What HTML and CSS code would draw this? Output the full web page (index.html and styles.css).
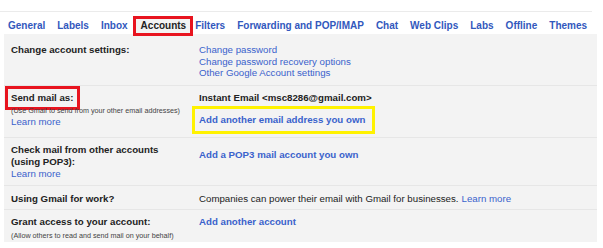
FILE: index.html
```html
<!DOCTYPE html>
<html lang="en">

<head>
  <meta charset="UTF-8" />
  <title>Settings - Accounts</title>
  <link rel="stylesheet" href="styles.css">
</head>

<body>
  <div class="tabs">
    <a class="tab">General</a>
    <a class="tab">Labels</a>
    <a class="tab">Inbox</a>
    <a class="tab active">Accounts</a>
    <a class="tab">Filters</a>
    <a class="tab">Forwarding and POP/IMAP</a>
    <a class="tab">Chat</a>
    <a class="tab">Web Clips</a>
    <a class="tab">Labs</a>
    <a class="tab">Offline</a>
    <a class="tab">Themes</a>
  </div>

  <div class="panel">
    <div class="row first">
      <div class="label">Change account settings:</div>
      <div class="value">
        <a class="link">Change password</a>
        <a class="link">Change password recovery options</a>
        <a class="link">Other Google Account settings</a>
      </div>
    </div>

    <div class="row send">
      <div class="label">
        <span class="marked">Send mail as:</span>
        <div class="note">(Use Gmail to send from your other email addresses)</div>
        <a class="link">Learn more</a>
      </div>
      <div class="value">
        <div class="strong">Instant Email &lt;msc8286@gmail.com&gt;</div>
        <div class="highlight"><a class="link strong">Add another email address you own</a></div>
      </div>
    </div>

    <div class="row pop">
      <div class="label">
        <div class="strong">Check mail from other accounts</div>
        <div class="strong">(using POP3):</div>
        <a class="link">Learn more</a>
      </div>
      <div class="value">
        <a class="link strong">Add a POP3 mail account you own</a>
      </div>
    </div>

    <div class="row work">
      <div class="label">Using Gmail for work?</div>
      <div class="value">
        <span class="plain">Companies can power their email with Gmail for businesses.</span>
        <a class="link">Learn more</a>
      </div>
    </div>

    <div class="row last">
      <div class="label">
        <div class="strong">Grant access to your account:</div>
        <div class="note">(Allow others to read and send mail on your behalf)</div>
      </div>
      <div class="value">
        <a class="link strong">Add another account</a>
      </div>
    </div>
  </div>
</body>

</html>
```

FILE: styles.css
```css
body {
  margin: 0;
  background: #fff;
  font-family: "Liberation Sans", Arial, sans-serif;
  color: #222;
}

.tabs {
  display: flex;
  align-items: flex-end;
  height: 23px;
  margin-top: 11px;
  width: 592px;
  border-top: 1px solid #ebebeb;
  padding-left: 2px;
  box-sizing: border-box;
  white-space: nowrap;
}

.tab {
  display: block;
  flex-shrink: 0;
  padding: 0 6px;
  margin-bottom: 1px;
  line-height: 14px;
  font-size: 10px;
  font-weight: bold;
  color: #3258bd;
}

.tab.active {
  position: relative;
  z-index: 1;
  color: #222;
  background: #f3f3f3;
  border: 3px solid #e8141f;
  padding: 0 4px 0 5px;
  margin: 0 -4px -2px -1px;
}

.panel {
  margin: 0 6px 0 4px;
  background: #f3f3f3;
  padding-top: 4px;
  padding-bottom: 1px;
}

.row {
  display: grid;
  grid-template-columns: 188px 1fr;
  padding: 7px 7px 5px;
  border-top: 1px solid #e6e6e6;
  font-size: 9.7px;
  line-height: 11.5px;
}

.row.first {
  border-top: none;
  padding: 6px 7px 6px;
}

.row.send {
  padding: 6px 7px 3px;
}

.row.pop {
  padding: 6px 7px 5px;
  line-height: 12px;
}

.row.last {
  padding: 6px 7px 0;
}

.label {
  font-weight: bold;
}

.value {
  display: flex;
  flex-direction: column;
  align-items: flex-start;
}

.row.work .value {
  flex-direction: row;
  gap: 3px;
}

.row.pop .value {
  padding-top: 5px;
}

.strong {
  font-weight: bold;
}

.plain {
  font-weight: normal;
}

.link {
  display: block;
  color: #3a62cc;
  font-weight: normal;
}

.link.strong {
  font-weight: bold;
}

.note {
  font-size: 7.2px;
  line-height: 10px;
  font-weight: normal;
  margin-top: 3px;
  color: #444;
}

.marked {
  display: inline-block;
  border: 3px solid #e8141f;
  padding: 3px 4px 4px 3px;
  margin: -6px 0 -7px -6px;
}

.highlight {
  margin: 3px 0 0 -7px;
  border: 3px solid #fff200;
  padding: 5px 7px 5px 4px;
}
```
